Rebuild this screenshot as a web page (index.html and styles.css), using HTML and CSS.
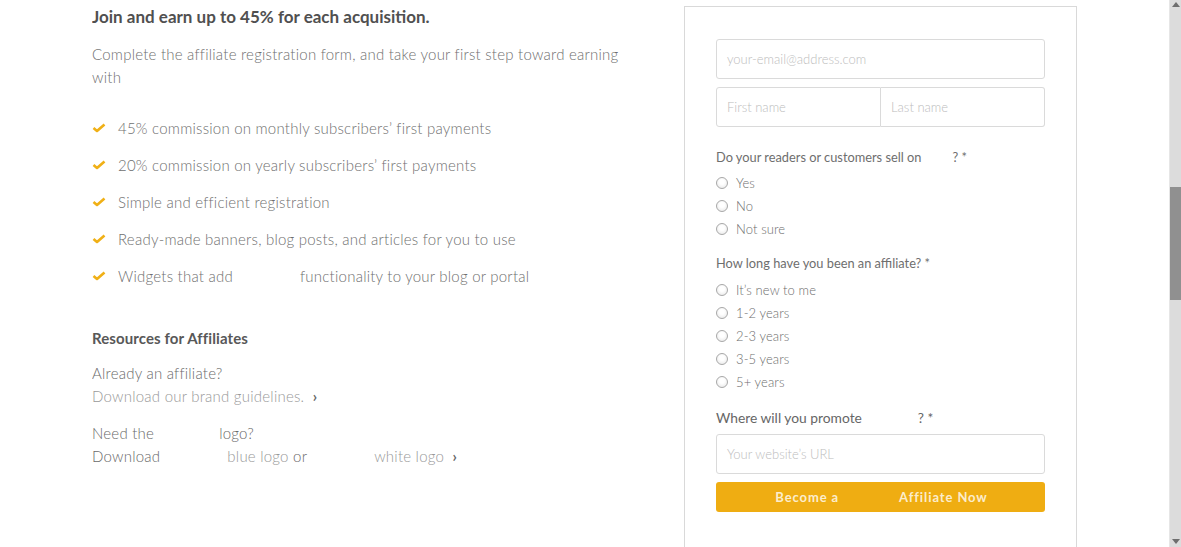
FILE: index.html
```html
<!DOCTYPE html>
<html>
<head>
<meta charset="utf-8">
<link rel="stylesheet" href="styles.css">
</head>
<body>
<div class="page">
  <main class="main">
    <div class="container">
      <section class="info">
        <h2 class="title">Join and earn up to 45% for each acquisition.</h2>
        <p class="lead">Complete the affiliate registration form, and take your first step toward earning with</p>
        <ul class="benefits">
          <li><svg class="check" viewBox="0 0 14 10" width="14" height="10"><polyline points="1.5,5 5,8 12.5,1.5" fill="none" stroke="#f0b016" stroke-width="2.6" stroke-linejoin="round"/></svg>45% commission on monthly subscribers’ first payments</li>
          <li><svg class="check" viewBox="0 0 14 10" width="14" height="10"><polyline points="1.5,5 5,8 12.5,1.5" fill="none" stroke="#f0b016" stroke-width="2.6" stroke-linejoin="round"/></svg>20% commission on yearly subscribers’ first payments</li>
          <li><svg class="check" viewBox="0 0 14 10" width="14" height="10"><polyline points="1.5,5 5,8 12.5,1.5" fill="none" stroke="#f0b016" stroke-width="2.6" stroke-linejoin="round"/></svg>Simple and efficient registration</li>
          <li><svg class="check" viewBox="0 0 14 10" width="14" height="10"><polyline points="1.5,5 5,8 12.5,1.5" fill="none" stroke="#f0b016" stroke-width="2.6" stroke-linejoin="round"/></svg>Ready-made banners, blog posts, and articles for you to use</li>
          <li><svg class="check" viewBox="0 0 14 10" width="14" height="10"><polyline points="1.5,5 5,8 12.5,1.5" fill="none" stroke="#f0b016" stroke-width="2.6" stroke-linejoin="round"/></svg>Widgets that add<span class="gap g68"></span>functionality to your blog or portal</li>
        </ul>
        <h3 class="res-title">Resources for Affiliates</h3>
        <div class="res-block">
          <div class="res-line">Already an affiliate?</div>
          <div class="res-line light">Download our brand guidelines. <span class="chev">›</span></div>
        </div>
        <div class="res-block">
          <div class="res-line">Need the<span class="gap g67"></span>logo?</div>
          <div class="res-line">Download<span class="gap g68"></span><span class="light">blue logo</span> or<span class="gap g68"></span><span class="light">white logo</span> <span class="chev">›</span></div>
        </div>
      </section>
      <section class="card">
        <div class="field"><span class="ph">your-email@address.com</span></div>
        <div class="name-row">
          <div class="field half"><span class="ph">First name</span></div>
          <div class="field half"><span class="ph">Last name</span></div>
        </div>
        <div class="question">Do your readers or customers sell on<span class="gap g31"></span>? *</div>
        <ul class="radios">
          <li><span class="radio"></span>Yes</li>
          <li><span class="radio"></span>No</li>
          <li><span class="radio"></span>Not sure</li>
        </ul>
        <div class="question">How long have you been an affiliate? *</div>
        <ul class="radios">
          <li><span class="radio"></span>It’s new to me</li>
          <li><span class="radio"></span>1-2 years</li>
          <li><span class="radio"></span>2-3 years</li>
          <li><span class="radio"></span>3-5 years</li>
          <li><span class="radio"></span>5+ years</li>
        </ul>
        <div class="question big">Where will you promote<span class="gap g56"></span>? *</div>
        <div class="field url"><span class="ph">Your website’s URL</span></div>
        <div class="button">Become a<span class="gap g60"></span>Affiliate Now</div>
      </section>
    </div>
  </main>
  <aside class="scrollbar">
    <div class="arrow up"></div>
    <div class="track-top"></div>
    <div class="thumb"></div>
    <div class="track-bottom"></div>
    <div class="arrow down"></div>
  </aside>
</div>
</body>
</html>
```
FILE: styles.css
```css
* { box-sizing: border-box; }
html, body { margin: 0; padding: 0; height: 100%; overflow: hidden; background: #fff; }
body { font-family: Lato, "Open Sans", sans-serif; color: #777; }

.page { display: flex; height: 547px; }
.main { flex: 1; display: flex; flex-direction: column; overflow: hidden; }
.container {
  width: 985px; margin: 0 auto; display: flex; justify-content: space-between; align-items: flex-start;
  flex: 1; overflow: hidden;
}

.info { width: 545px; padding-top: 7px; }
.title { margin: 0; font-size: 17px; line-height: 20px; font-weight: 700; color: #505050; letter-spacing: 0px; }
.lead { margin: 16px 0 0; font-size: 15px; line-height: 23px; font-weight: 300; color: #6f6f6f; letter-spacing: 0.23px; }
.benefits { list-style: none; margin: 28px 0 0; padding: 0; display: flex; flex-direction: column; gap: 14px; }
.benefits li { display: flex; align-items: center; font-size: 15px; line-height: 23px; font-weight: 300; color: #6f6f6f; letter-spacing: 0.23px; }
.check { flex: none; margin-right: 12px; margin-top: -1px; }
.gap { display: inline-block; }
.g68 { width: 67px; }
.g67 { width: 65px; }
.g60 { width: 60px; }
.g56 { width: 56px; }
.g31 { width: 31px; }
.res-title { margin: 39px 0 0; font-size: 15px; line-height: 23px; font-weight: 700; color: #585858; letter-spacing: 0.1px; }
.res-block { margin-top: 12px; }
.res-block + .res-block { margin-top: 14px; }
.res-line { font-size: 15px; line-height: 23px; font-weight: 300; color: #6a6a6a; letter-spacing: 0.23px; }
.light { color: #999; }
.chev { display: inline-block; margin-left: 4px; font-weight: 700; color: #666; }

.card {
  width: 393px; height: 560px; margin-top: 6px;
  border: 1px solid #d9d9d9; box-shadow: 1px 0 0 #e9e9e9;
  padding: 32px 31px 0;
}
.field {
  height: 40px; border: 1px solid #dadada; border-radius: 3px;
  display: flex; align-items: center; padding-left: 10px;
  font-size: 13px; font-weight: 300;
}
.ph { color: #bdbdbd; }
.name-row { display: flex; margin-top: 8px; }
.half { flex: 1; }
.half:first-child { border-radius: 3px 0 0 3px; }
.half:last-child { border-left: none; border-radius: 0 3px 3px 0; }
.question { margin-top: 21px; font-size: 12.8px; line-height: 18px; color: #6e6e6e; }
.radios { list-style: none; margin: 6px 0 0; padding: 0; }
.radios + .question { margin-top: 13px; }
.radios li { display: flex; align-items: center; font-size: 13px; line-height: 23px; font-weight: 300; color: #6e6e6e; letter-spacing: 0.1px; }
.radios:nth-of-type(2) { margin-top: 7px; }
.radio {
  width: 12px; height: 12px; border-radius: 50%; border: 1px solid #a8a8a8;
  background: radial-gradient(circle at 50% 40%, #fff 30%, #e4e4e4 100%);
  margin-right: 8px; margin-top: -2px; flex: none;
}
.question.big { margin-top: 15px; font-size: 13.8px; color: #666; }
.url { margin-top: 7px; }
.button {
  margin-top: 8px; height: 30px; border-radius: 3px; background: #efad12;
  display: flex; align-items: center; justify-content: center;
  font-size: 13px; font-weight: 700; letter-spacing: 0.9px; color: rgba(255,255,255,0.8);
  padding-left: 2px;
}

.scrollbar { width: 12px; flex: none; display: flex; flex-direction: column; background: #dcdcdc; border-left: 1px solid #e6e6e6; }
.arrow { height: 10px; flex: none; position: relative; }
.arrow.up::after, .arrow.down::after {
  content: ""; position: absolute; left: 2px; width: 0; height: 0;
  border-left: 4px solid transparent; border-right: 4px solid transparent;
}
.arrow.up::after { top: 2px; border-bottom: 5px solid #6e6e6e; }
.arrow.down::after { bottom: 3px; border-top: 5px solid #6e6e6e; }
.track-top { height: 177px; flex: none; }
.thumb { height: 113px; flex: none; background: #909090; }
.track-bottom { flex: 1; }
```
